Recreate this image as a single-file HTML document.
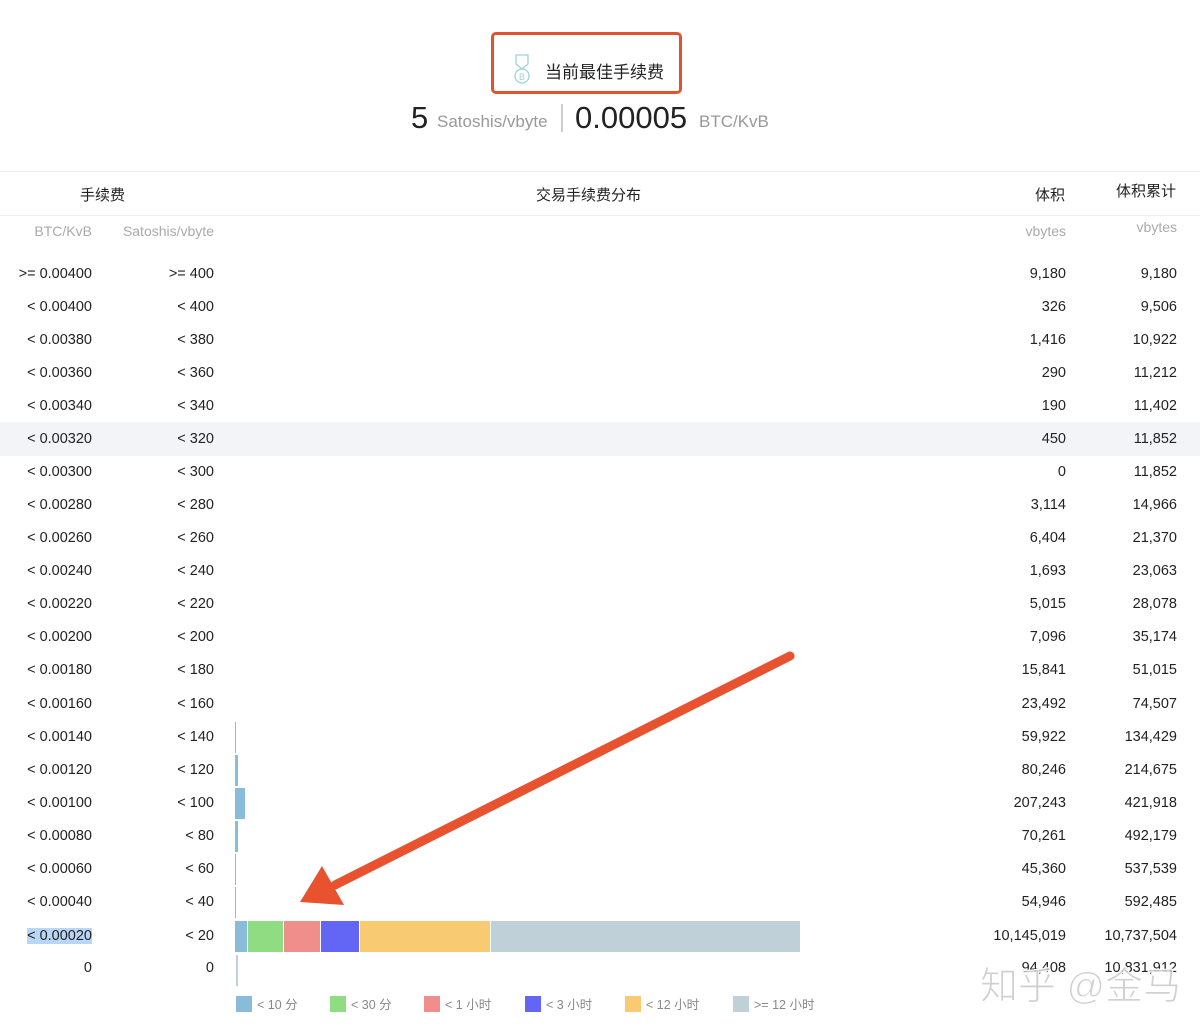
<!DOCTYPE html>
<html><head><meta charset="utf-8"><style>
*{margin:0;padding:0;box-sizing:border-box}
body{width:1200px;height:1030px;background:#fff;position:relative;overflow:hidden;font-family:"Liberation Sans","Noto Sans CJK SC",sans-serif;color:#222}
.a{position:absolute;white-space:nowrap}
.g{color:#aaa}
.row{position:absolute;left:0;width:1200px;height:33px;font-size:14.5px;color:#222}
.row span{position:absolute;top:9px}
.c1{right:1108px}.c2{right:986px}.c3{right:134px}.c4{right:23px}
.bar{position:absolute;height:31px}
.lg{position:absolute;top:996px;width:16px;height:16px}
.lt{position:absolute;top:994px;font-size:12.5px;color:#888}
</style></head><body>
<div class="a" style="left:491px;top:32px;width:191px;height:62px;border:3px solid #e0532f;border-radius:5px"></div>
<svg class="a" style="left:511px;top:54px" width="22" height="32" viewBox="0 0 22 32"><path d="M5 1v9l6 5 6-5V1z" fill="none" stroke="#9ed2dc" stroke-width="1.3"/><circle cx="11" cy="22" r="7" fill="none" stroke="#9ed2dc" stroke-width="1.3"/><text x="8" y="26" font-size="9" fill="#9ed2dc" font-family="Liberation Sans">B</text></svg>
<div class="a" style="left:545px;top:58px;font-size:17px;color:#222">当前最佳手续费</div>
<div class="a" style="left:411px;top:100px;font-size:31px;color:#222">5</div>
<div class="a" style="left:437px;top:112px;font-size:17px;color:#999">Satoshis/vbyte</div>
<div class="a" style="left:561px;top:104px;width:2px;height:28px;background:#ccc"></div>
<div class="a" style="left:575px;top:100px;font-size:31px;color:#222">0.00005</div>
<div class="a" style="left:699px;top:112px;font-size:17px;color:#999">BTC/KvB</div>
<div class="a" style="left:0;top:171px;width:1200px;height:1px;background:#eee"></div>
<div class="a" style="left:0;top:215px;width:1200px;height:1px;background:#eee"></div>
<div class="a" style="left:80px;top:184px;font-size:15px">手续费</div>
<div class="a" style="left:536px;top:184px;font-size:15px">交易手续费分布</div>
<div class="a" style="left:1035px;top:184px;font-size:15px">体积</div>
<div class="a" style="left:1116px;top:180px;font-size:15px">体积累计</div>
<div class="a g" style="right:1108px;top:223px;font-size:14px">BTC/KvB</div>
<div class="a g" style="right:986px;top:223px;font-size:14px">Satoshis/vbyte</div>
<div class="a g" style="right:134px;top:223px;font-size:14px">vbytes</div>
<div class="a g" style="right:23px;top:219px;font-size:14px">vbytes</div>
<div class="a" style="left:0;top:422px;width:1200px;height:34px;background:#f3f4f8"></div>

<div class="row" style="top:257px"><span class="c1">&gt;= 0.00400</span><span class="c2">&gt;= 400</span><span class="c3">9,180</span><span class="c4">9,180</span></div>
<div class="row" style="top:290px"><span class="c1">&lt; 0.00400</span><span class="c2">&lt; 400</span><span class="c3">326</span><span class="c4">9,506</span></div>
<div class="row" style="top:323px"><span class="c1">&lt; 0.00380</span><span class="c2">&lt; 380</span><span class="c3">1,416</span><span class="c4">10,922</span></div>
<div class="row" style="top:356px"><span class="c1">&lt; 0.00360</span><span class="c2">&lt; 360</span><span class="c3">290</span><span class="c4">11,212</span></div>
<div class="row" style="top:389px"><span class="c1">&lt; 0.00340</span><span class="c2">&lt; 340</span><span class="c3">190</span><span class="c4">11,402</span></div>
<div class="row" style="top:422px"><span class="c1">&lt; 0.00320</span><span class="c2">&lt; 320</span><span class="c3">450</span><span class="c4">11,852</span></div>
<div class="row" style="top:455px"><span class="c1">&lt; 0.00300</span><span class="c2">&lt; 300</span><span class="c3">0</span><span class="c4">11,852</span></div>
<div class="row" style="top:488px"><span class="c1">&lt; 0.00280</span><span class="c2">&lt; 280</span><span class="c3">3,114</span><span class="c4">14,966</span></div>
<div class="row" style="top:521px"><span class="c1">&lt; 0.00260</span><span class="c2">&lt; 260</span><span class="c3">6,404</span><span class="c4">21,370</span></div>
<div class="row" style="top:554px"><span class="c1">&lt; 0.00240</span><span class="c2">&lt; 240</span><span class="c3">1,693</span><span class="c4">23,063</span></div>
<div class="row" style="top:587px"><span class="c1">&lt; 0.00220</span><span class="c2">&lt; 220</span><span class="c3">5,015</span><span class="c4">28,078</span></div>
<div class="row" style="top:620px"><span class="c1">&lt; 0.00200</span><span class="c2">&lt; 200</span><span class="c3">7,096</span><span class="c4">35,174</span></div>
<div class="row" style="top:653px"><span class="c1">&lt; 0.00180</span><span class="c2">&lt; 180</span><span class="c3">15,841</span><span class="c4">51,015</span></div>
<div class="row" style="top:687px"><span class="c1">&lt; 0.00160</span><span class="c2">&lt; 160</span><span class="c3">23,492</span><span class="c4">74,507</span></div>
<div class="row" style="top:720px"><span class="c1">&lt; 0.00140</span><span class="c2">&lt; 140</span><span class="c3">59,922</span><span class="c4">134,429</span></div>
<div class="row" style="top:753px"><span class="c1">&lt; 0.00120</span><span class="c2">&lt; 120</span><span class="c3">80,246</span><span class="c4">214,675</span></div>
<div class="row" style="top:786px"><span class="c1">&lt; 0.00100</span><span class="c2">&lt; 100</span><span class="c3">207,243</span><span class="c4">421,918</span></div>
<div class="row" style="top:819px"><span class="c1">&lt; 0.00080</span><span class="c2">&lt; 80</span><span class="c3">70,261</span><span class="c4">492,179</span></div>
<div class="row" style="top:852px"><span class="c1">&lt; 0.00060</span><span class="c2">&lt; 60</span><span class="c3">45,360</span><span class="c4">537,539</span></div>
<div class="row" style="top:885px"><span class="c1">&lt; 0.00040</span><span class="c2">&lt; 40</span><span class="c3">54,946</span><span class="c4">592,485</span></div>
<div class="row" style="top:919px"><span class="c1" style="background:#b9d7f5">&lt; 0.00020</span><span class="c2">&lt; 20</span><span class="c3">10,145,019</span><span class="c4">10,737,504</span></div>
<div class="row" style="top:951px"><span class="c1">0</span><span class="c2">0</span><span class="c3">94,408</span><span class="c4">10,831,912</span></div>

<div class="bar" style="left:235px;top:722px;width:1px;background:#89bcd8"></div>
<div class="bar" style="left:235px;top:755px;width:3px;background:#89bcd8"></div>
<div class="bar" style="left:235px;top:788px;width:10px;background:#89bcd8"></div>
<div class="bar" style="left:235px;top:821px;width:3px;background:#89bcd8"></div>
<div class="bar" style="left:235px;top:854px;width:1px;background:#89bcd8"></div>
<div class="bar" style="left:235px;top:887px;width:1px;background:#89bcd8"></div>
<div class="bar" style="left:235px;top:921px;width:12px;background:#89bcd8"></div>
<div class="bar" style="left:248px;top:921px;width:35px;background:#8fdc82"></div>
<div class="bar" style="left:284px;top:921px;width:36px;background:#ef8e8a"></div>
<div class="bar" style="left:321px;top:921px;width:38px;background:#6366f5"></div>
<div class="bar" style="left:360px;top:921px;width:130px;background:#f8ca72"></div>
<div class="bar" style="left:491px;top:921px;width:309px;background:#bfd0d8"></div>
<div class="bar" style="left:236px;top:955px;width:2px;background:#bfd0d8"></div>

<div class="lg" style="left:236px;background:#89bcd8"></div><div class="lt" style="left:257px">&lt; 10 分</div>
<div class="lg" style="left:330px;background:#8fdc82"></div><div class="lt" style="left:351px">&lt; 30 分</div>
<div class="lg" style="left:424px;background:#ef8e8a"></div><div class="lt" style="left:445px">&lt; 1 小时</div>
<div class="lg" style="left:525px;background:#6366f5"></div><div class="lt" style="left:546px">&lt; 3 小时</div>
<div class="lg" style="left:625px;background:#f8ca72"></div><div class="lt" style="left:646px">&lt; 12 小时</div>
<div class="lg" style="left:733px;background:#bfd0d8"></div><div class="lt" style="left:754px">&gt;= 12 小时</div>

<svg class="a" style="left:0;top:0" width="1200" height="1030"><line x1="790" y1="656" x2="335" y2="885" stroke="#e8522f" stroke-width="9" stroke-linecap="round"/><polygon points="300,902 322,866 344,905" fill="#e8522f"/></svg>
<div class="a" style="left:980px;top:955px;font-size:38px;color:rgba(200,200,200,0.85);-webkit-text-stroke:1px #fff">知乎 @金马</div>
</body></html>
